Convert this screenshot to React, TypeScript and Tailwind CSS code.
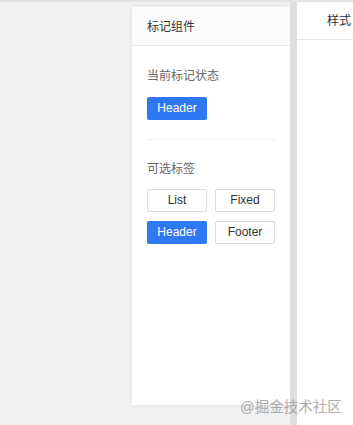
import { FC } from "react";

const font = { fontFamily: '"Liberation Sans", "Noto Sans CJK SC", sans-serif' };

interface TagProps {
  label: string;
  active?: boolean;
}

const Tag: FC<TagProps> = ({ label, active }) => (
  <button
    className={
      active
        ? "w-[60px] h-[23px] rounded-[2px] bg-[#2f78f4] text-white text-[12px] leading-none"
        : "w-[60px] h-[23px] rounded-[2px] border border-[#dcdcdc] bg-white text-[#333] text-[12px] leading-none"
    }
  >
    {label}
  </button>
);

export default function App() {
  return (
    <div
      className="relative w-[353px] h-[425px] overflow-hidden bg-[#f2f2f2] border-t-2 border-[#e4e4e4] flex"
      style={font}
    >
      {/* Left canvas with panel */}
      <div className="w-[290px] shrink-0 pl-[132px] pt-[5px] pb-[20px] flex">
        <div className="w-[158px] bg-white shadow-[0_0_6px_rgba(0,0,0,0.08)] flex flex-col">
          <div className="h-[39px] border-b border-[#e6e6e6] bg-[#fcfcfc] flex items-center pt-[2px] px-[15px] text-[12px] text-[#333]">
            标记组件
          </div>
          <div className="px-[15px] pt-[22px]">
            <div className="text-[12px] text-[#666] leading-[16px]">当前标记状态</div>
            <div className="mt-[11px]">
              <Tag label="Header" active />
            </div>
            <div className="mt-[19px] border-t border-[#f0f0f0]" />
            <div className="mt-[21px] text-[12px] text-[#666] leading-[16px]">可选标签</div>
            <div className="mt-[12px] grid grid-cols-[60px_60px] gap-x-[8px] gap-y-[9px]">
              <Tag label="List" />
              <Tag label="Fixed" />
              <Tag label="Header" active />
              <Tag label="Footer" />
            </div>
          </div>
        </div>
      </div>

      {/* Divider strip */}
      <div className="w-[7px] shrink-0 bg-[#dedede]" />

      {/* Right panel */}
      <div className="flex-1 bg-white flex flex-col">
        <div className="h-[38px] border-b border-[#e6e6e6] flex items-center pl-[30px] text-[12px] text-[#333] whitespace-nowrap">
          样式
        </div>
      </div>

      {/* Watermark */}
      <div className="absolute left-[240px] top-[395px] text-[14.5px] text-[#9a9a9a] opacity-80 whitespace-nowrap">
        @掘金技术社区
      </div>
    </div>
  );
}
